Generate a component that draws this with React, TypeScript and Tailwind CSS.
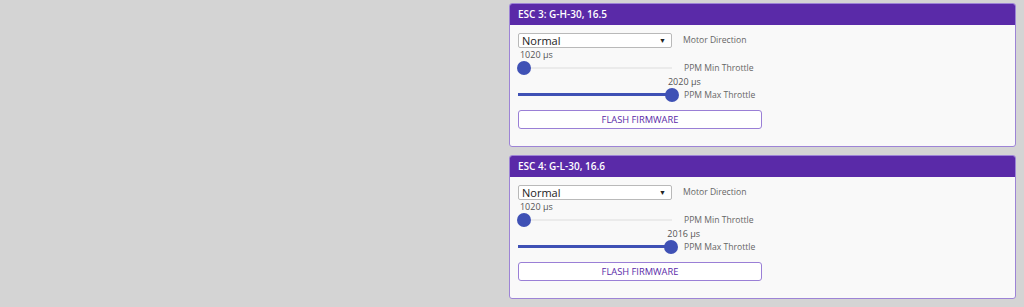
import React from 'react';

interface Esc {
  id: number;
  name: string;
  min: number;
  max: number;
}

const escs: Esc[] = [
  { id: 3, name: 'G-H-30, 16.5', min: 1020, max: 2020 },
  { id: 4, name: 'G-L-30, 16.6', min: 1020, max: 2016 },
];

// thumb centre in px from the track's left edge
const pos = (v: number) => 3 + (v - 1000) * 0.148;

function Slider({ value, label, filled }: { value: number; label: string; filled?: boolean }) {
  const x = pos(value);
  return (
    <div className="flex flex-col">
      <div className="relative h-[13px] w-[154px]">
        <span className="absolute top-0 text-[9px] leading-[13px] text-[#555] whitespace-nowrap" style={{ left: x - 4 }}>
          {value} µs
        </span>
      </div>
      <div className="flex items-center h-[14px]">
        <div className="relative w-[154px] h-[14px]">
          <div className="absolute left-0 right-0 top-[6px] h-[2px] bg-[#ebebeb]" />
          {filled && <div className="absolute left-0 top-[5px] h-[3px] bg-[#3f51b5]" style={{ width: x }} />}
          <div className="absolute top-[0px] w-[14px] h-[14px] rounded-full bg-[#3f51b5]" style={{ left: x - 7 }} />
        </div>
        <span className="ml-[12px] text-[8.6px] text-[#666]">{label}</span>
      </div>
    </div>
  );
}

function EscCard({ esc }: { esc: Esc }) {
  return (
    <div className="w-[507px] border border-[#9d84d6] rounded-[3px] bg-[#f9f9f9] overflow-hidden">
      <div className="h-[21px] bg-[#5a2aa8] px-[8px] flex items-center text-white text-[10px] font-semibold">
        ESC {esc.id}: {esc.name}
      </div>
      <div className="px-[8px] pt-[8px] pb-[17px]">
        <div className="flex items-center">
          <div className="w-[154px] h-[15px] border border-[#b9b9b9] rounded-[2px] bg-white flex items-center justify-between pl-[3px] pr-[5px]">
            <span className="text-[11px] text-[#222] leading-none">Normal</span>
            <span className="text-[7px] text-[#222] leading-none">▼</span>
          </div>
          <span className="ml-[11px] text-[8.6px] text-[#666]">Motor Direction</span>
        </div>
        <Slider value={esc.min} label="PPM Min Throttle" />
        <Slider value={esc.max} label="PPM Max Throttle" filled />
        <button className="mt-[8px] w-[244px] h-[19px] border border-[#9a7fd6] rounded-[3px] bg-white text-[9.3px] text-[#5a2aa8] flex items-center justify-center">
          FLASH FIRMWARE
        </button>
      </div>
    </div>
  );
}

export default function App() {
  return (
    <div className="w-[1024px] h-[307px] bg-[#d4d4d4] flex justify-end pr-[8px] pt-[3px] overflow-hidden" style={{ fontFamily: '"Open Sans", sans-serif' }}>
      <div className="flex flex-col gap-[8px]">
        {escs.map((e) => (
          <EscCard key={e.id} esc={e} />
        ))}
      </div>
    </div>
  );
}
